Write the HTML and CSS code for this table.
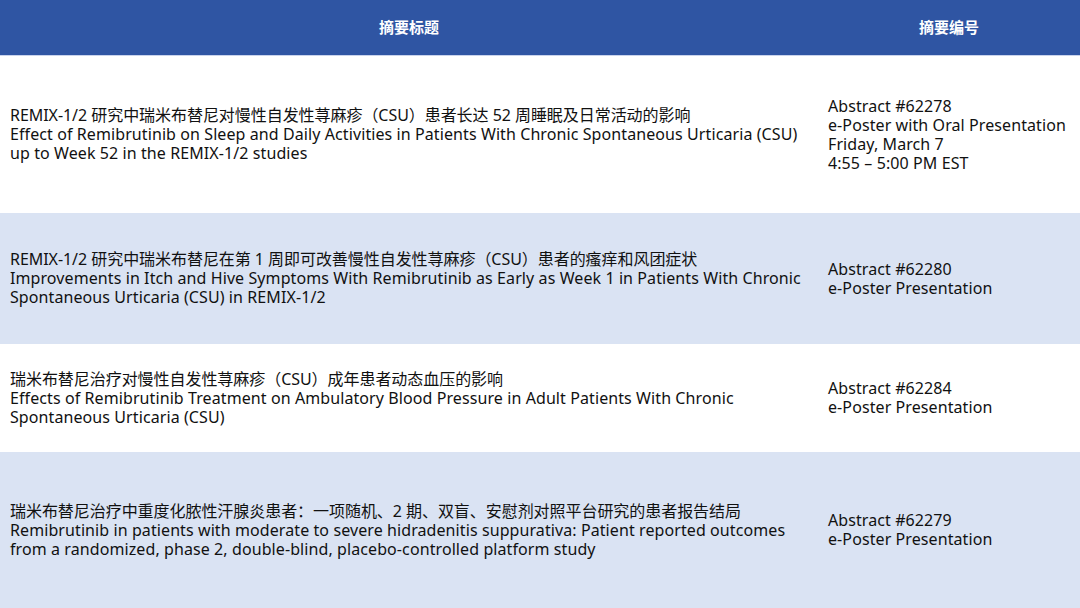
FILE: index.html
```html
<!DOCTYPE html>
<html lang="zh">
<head>
<meta charset="utf-8">
<link rel="stylesheet" href="styles.css">
</head>
<body>
<div class="table">
  <div class="row head">
    <div class="cell c1">摘要标题</div>
    <div class="cell c2">摘要编号</div>
  </div>
  <div class="row r1">
    <div class="cell c1"><div class="txt"><span class="zh">REMIX-1/2 研究中瑞米布替尼对慢性自发性荨麻疹（CSU）患者长达 52 周睡眠及日常活动的影响</span><span class="en">Effect of Remibrutinib on Sleep and Daily Activities in Patients With Chronic Spontaneous Urticaria (CSU) up to Week 52 in the REMIX-1/2 studies</span></div></div>
    <div class="cell c2"><div class="txt en"><span>Abstract #62278</span><span>e-Poster with Oral Presentation</span><span>Friday, March 7</span><span>4:55 – 5:00 PM EST</span></div></div>
  </div>
  <div class="row r2 alt">
    <div class="cell c1"><div class="txt"><span class="zh">REMIX-1/2 研究中瑞米布替尼在第 1 周即可改善慢性自发性荨麻疹（CSU）患者的瘙痒和风团症状</span><span class="en">Improvements in Itch and Hive Symptoms With Remibrutinib as Early as Week 1 in Patients With Chronic Spontaneous Urticaria (CSU) in REMIX-1/2</span></div></div>
    <div class="cell c2"><div class="txt en"><span>Abstract #62280</span><span>e-Poster Presentation</span></div></div>
  </div>
  <div class="row r3">
    <div class="cell c1"><div class="txt"><span class="zh">瑞米布替尼治疗对慢性自发性荨麻疹（CSU）成年患者动态血压的影响</span><span class="en">Effects of Remibrutinib Treatment on Ambulatory Blood Pressure in Adult Patients With Chronic Spontaneous Urticaria (CSU)</span></div></div>
    <div class="cell c2"><div class="txt en"><span>Abstract #62284</span><span>e-Poster Presentation</span></div></div>
  </div>
  <div class="row r4 alt">
    <div class="cell c1"><div class="txt"><span class="zh">瑞米布替尼治疗中重度化脓性汗腺炎患者：一项随机、2 期、双盲、安慰剂对照平台研究的患者报告结局</span><span class="en">Remibrutinib in patients with moderate to severe hidradenitis suppurativa: Patient reported outcomes from a randomized, phase 2, double-blind, placebo-controlled platform study</span></div></div>
    <div class="cell c2"><div class="txt en"><span>Abstract #62279</span><span>e-Poster Presentation</span></div></div>
  </div>
</div>
</body>
</html>
```

FILE: styles.css
```css
html, body {
  margin: 0;
  padding: 0;
  background: #ffffff;
}
body {
  width: 1080px;
  height: 608px;
  overflow: hidden;
  font-family: "Noto Sans", "Noto Sans CJK SC", sans-serif;
  font-size: 16px;
  line-height: 19px;
  color: #111111;
}
.table {
  display: flex;
  flex-direction: column;
}
.row {
  display: grid;
  grid-template-columns: 818px 262px;
}
.cell {
  display: flex;
  align-items: center;
  padding: 0 10px;
}
.txt span {
  display: block;
}
.en {
  letter-spacing: 0.09px;
}
.zh {
  letter-spacing: -0.05px;
}
.head {
  height: 56px;
  background: #2f55a3;
  color: #ffffff;
  font-weight: bold;
  font-size: 15px;
  border-bottom: 1px solid #c9d3ec;
  box-sizing: border-box;
}
.head .cell {
  justify-content: center;
}
.r1 { height: 157px; }
.r2 { height: 131px; }
.r3 { height: 108px; }
.r4 { height: 156px; }
.alt { background: #dae3f3; }
```
